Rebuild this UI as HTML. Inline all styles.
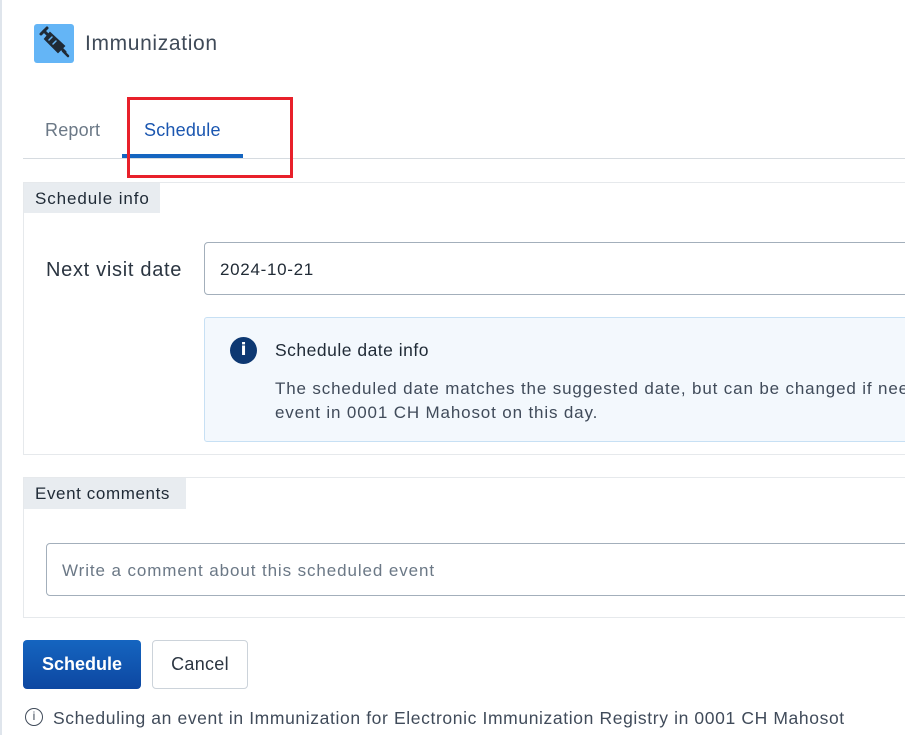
<!DOCTYPE html>
<html><head><meta charset="utf-8"><style>
*{box-sizing:border-box;margin:0;padding:0}
body{width:905px;height:735px;overflow:hidden;background:#fff;font-family:"Liberation Sans",sans-serif;position:relative;color:#212b36}
.a{position:absolute;white-space:nowrap}
</style></head><body>
<div class="a" style="left:0;top:0;width:2px;height:735px;background:#dfe5ec"></div>
<div class="a" style="left:34px;top:24px;width:40px;height:39px;background:#64b5f6;border-radius:3px">
<svg width="40" height="39" viewBox="0 0 40 39"><g stroke="#1f2a36" stroke-linecap="round" fill="none"><path d="M7 10 L13 4" stroke-width="3"/><path d="M10 7 L31 28" stroke-width="3"/><path d="M16 9 L30 22 L24 28 L11 15Z" fill="#1f2a36" stroke-width="2"/><path d="M29 27 L34 32" stroke-width="2.5"/><path d="M15 16 L18 13 M19 20 L22 17" stroke="#64b5f6" stroke-width="1.5"/></g></svg></div>
<div class="a" style="left:85px;top:32px;font-size:21px;letter-spacing:0.65px;color:#3f4a58">Immunization</div>
<div class="a" style="left:45px;top:120px;font-size:18px;letter-spacing:0.2px;color:#6b7886">Report</div>
<div class="a" style="left:144px;top:120px;font-size:18px;letter-spacing:0.2px;color:#1a56b0">Schedule</div>
<div class="a" style="left:23px;top:158px;width:882px;height:1px;background:#d6dbe0"></div>
<div class="a" style="left:122px;top:154px;width:121px;height:4px;background:#1565c0"></div>
<div class="a" style="left:127px;top:97px;width:166px;height:81px;border:3px solid #e8202a"></div>

<div class="a" style="left:23px;top:182px;width:900px;height:273px;border:1px solid #e6e9ec"></div>
<div class="a" style="left:24px;top:183px;width:136px;height:30px;background:#e8ecf0;font-size:17px;letter-spacing:0.9px;padding:6px 0 0 11px;color:#1f2a36">Schedule info</div>
<div class="a" style="left:46px;top:259px;font-size:20px;letter-spacing:0.7px;color:#2b3541">Next visit date</div>
<div class="a" style="left:204px;top:242px;width:720px;height:53px;border:1px solid #a3afbb;border-radius:4px;font-size:17px;letter-spacing:0.7px;padding:17px 0 0 15px;color:#212b36">2024-10-21</div>
<div class="a" style="left:204px;top:317px;width:720px;height:125px;background:#f3f8fd;border:1px solid #c7e0f4;border-radius:3px"></div>
<div class="a" style="left:230px;top:337px;width:27px;height:27px;border-radius:50%;background:#0d3872;color:#fff;font-weight:bold;font-size:17px;text-align:center;line-height:27px;font-family:'DejaVu Sans',sans-serif">i</div>
<div class="a" style="left:275px;top:340px;font-size:17.5px;letter-spacing:0.5px;color:#1f2a36">Schedule date info</div>
<div class="a" style="left:275px;top:377px;font-size:17px;letter-spacing:0.85px;color:#404b5a;line-height:24px">The scheduled date matches the suggested date, but can be changed if needed<br>event in 0001 CH Mahosot on this day.</div>

<div class="a" style="left:23px;top:477px;width:900px;height:141px;border:1px solid #e6e9ec"></div>
<div class="a" style="left:24px;top:478px;width:162px;height:31px;background:#e8ecf0;font-size:17px;letter-spacing:0.6px;padding:6px 0 0 11px;color:#1f2a36">Event comments</div>
<div class="a" style="left:46px;top:543px;width:880px;height:53px;border:1px solid #a3afbb;border-radius:4px;font-size:17px;letter-spacing:0.9px;padding:17px 0 0 15px;color:#6b7886">Write a comment about this scheduled event</div>

<div class="a" style="left:23px;top:640px;width:118px;height:49px;border-radius:4px;background:linear-gradient(#1565c0,#0d47a1);color:#fff;font-weight:bold;font-size:18px;text-align:center;line-height:49px">Schedule</div>
<div class="a" style="left:152px;top:640px;width:96px;height:49px;border-radius:4px;border:1px solid #ccd3da;color:#2b3541;font-size:18px;letter-spacing:0.3px;text-align:center;line-height:47px">Cancel</div>
<div class="a" style="left:25px;top:708px;width:18px;height:18px;border:1.5px solid #404b5a;border-radius:50%;font-size:12px;text-align:center;line-height:15px;color:#404b5a">i</div>
<div class="a" style="left:53px;top:708px;font-size:17.5px;letter-spacing:0.62px;color:#404b5a">Scheduling an event in Immunization for Electronic Immunization Registry in 0001 CH Mahosot</div>
</body></html>
